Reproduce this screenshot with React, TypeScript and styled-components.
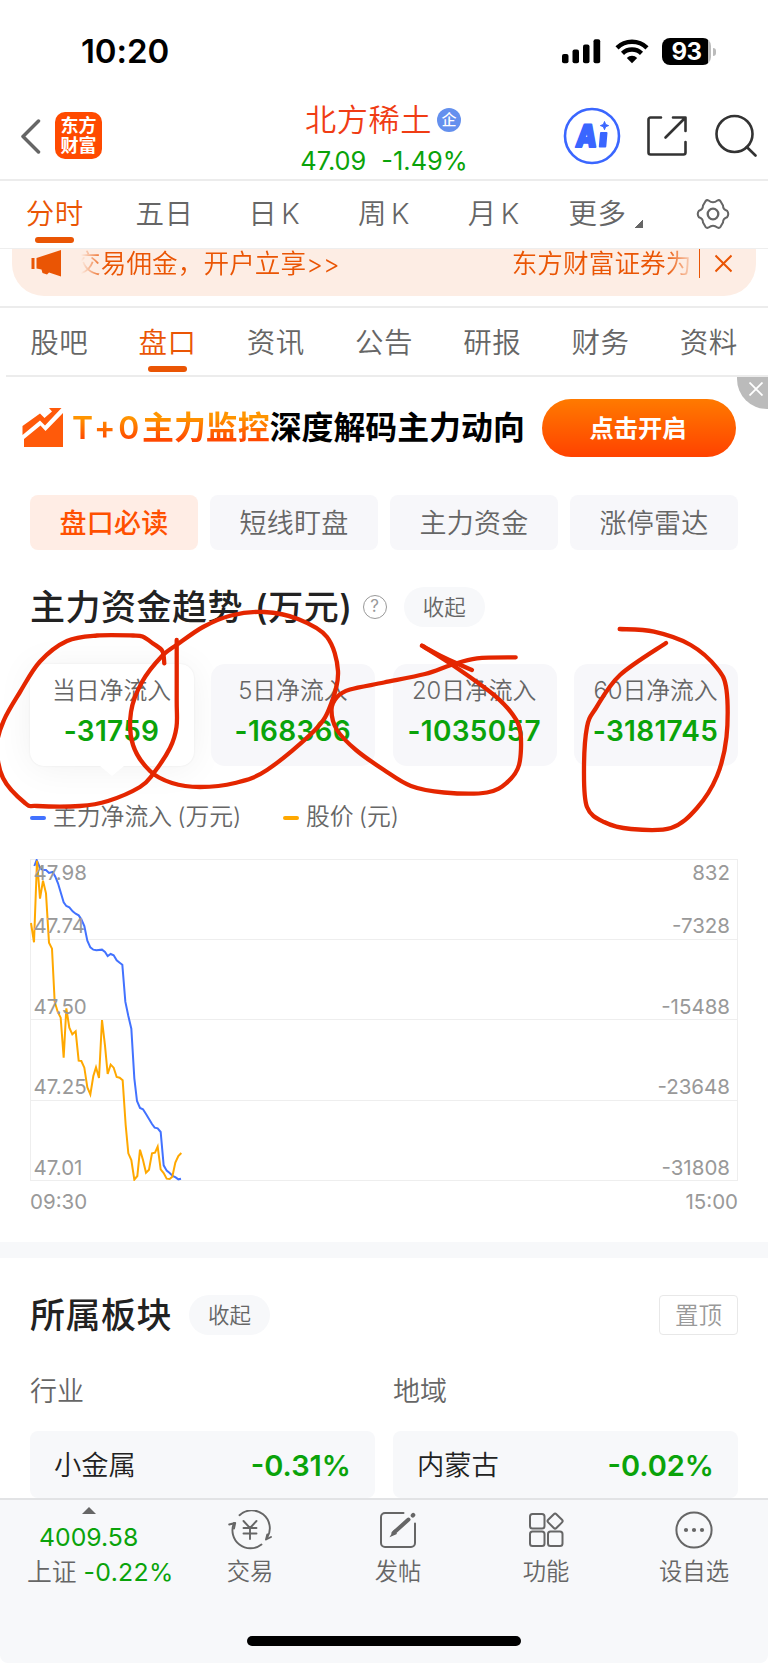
import React from 'react';
import styled, { createGlobalStyle, css } from 'styled-components';

const ORANGE = '#ea5504';
const GREEN = '#0aa30a';
const GREY = '#666';

const GlobalStyle = createGlobalStyle`
  * { box-sizing: border-box; }
  body {
    margin: 0;
    background: #fff;
    font-family: Inter, "Noto Sans CJK SC", sans-serif;
    color: #222;
    -webkit-font-smoothing: antialiased;
  }
`;

const Screen = styled.div`
  position: relative;
  width: 768px;
  height: 1663px;
  overflow: hidden;
  display: flex;
  flex-direction: column;
  background: #fff;
  white-space: nowrap;
`;

const StatusBar = styled.div`
  height: 90px;
  flex: none;
  display: flex;
  justify-content: space-between;
  padding: 35px 57px 0 81px;
`;

const Clock = styled.div`
  font-size: 33px;
  font-weight: 600;
  line-height: 33px;
  letter-spacing: -0.1px;
  color: #000;
`;

const StatusIcons = styled.div`
  display: flex;
  align-items: center;
  height: 32px;
  gap: 13.4px;
`;

const Battery = styled.div`
  position: relative;
  width: 49px;
  height: 27px;
  border-radius: 8px;
  background: linear-gradient(90deg, #000 94%, #bbb 94%);
  color: #fff;
  font-size: 24px;
  font-weight: 700;
  line-height: 28px;
  text-align: center;
  letter-spacing: -0.5px;
  &::after {
    content: '';
    position: absolute;
    right: -5px;
    top: 10px;
    width: 3px;
    height: 8px;
    border-radius: 0 3px 3px 0;
    background: #bbb;
  }
`;

const NavBar = styled.header`
  height: 91px;
  flex: none;
  display: grid;
  grid-template-columns: 260px 1fr 260px;
  border-bottom: 2px solid #ececec;
`;

const NavLeft = styled.div`
  display: flex;
  align-items: center;
  padding: 2px 0 0 20px;
  gap: 13px;
`;

const Logo = styled.div`
  width: 47px;
  height: 47px;
  border-radius: 10px;
  background: #ff4a00;
  color: #fff;
  font-size: 18px;
  font-weight: 700;
  line-height: 19.5px;
  padding-top: 4px;
  text-align: center;
`;

const NavTitle = styled.div`
  display: flex;
  flex-direction: column;
  align-items: center;
`;

const StockName = styled.div`
  display: flex;
  align-items: center;
  gap: 5px;
  height: 34px;
  margin: 13px 2px 0 0;
  font-size: 31.2px;
  letter-spacing: 0.6px;
  font-weight: 350;
  line-height: 34px;
  color: #f03c14;
`;

const Badge = styled.span`
  width: 24px;
  height: 24px;
  margin-bottom: 1px;
  border-radius: 50%;
  background: #6490ee;
  color: #fff;
  font-size: 15px;
  font-weight: 500;
  line-height: 23px;
  letter-spacing: 0;
  text-align: center;
`;

const StockQuote = styled.div`
  display: flex;
  gap: 15px;
  margin-top: 8px;
  font-size: 25.4px;
  letter-spacing: 0;
  line-height: 32px;
  color: ${GREEN};
`;

const NavActions = styled.div`
  display: flex;
  align-items: center;
  justify-content: flex-end;
  padding: 2px 11px 0 0;
  gap: 25px;
`;

const Tabs = styled.nav<{ $inset?: number; $top: number }>`
  height: 67px;
  flex: none;
  display: flex;
  padding: ${p => p.$top}px ${p => p.$inset ?? 0}px 0;
`;

const Tab = styled.div<{ $active?: boolean }>`
  flex: 1;
  display: flex;
  flex-direction: column;
  align-items: center;
  font-size: 28.5px;
  letter-spacing: 0.5px;
  font-weight: 350;
  line-height: 40px;
  color: ${p => (p.$active ? ORANGE : GREY)};
  &::after {
    content: '';
    width: 39px;
    height: 6px;
    margin-top: 3px;
    border-radius: 3px;
    background: ${p => (p.$active ? ORANGE : 'transparent')};
  }
`;

const TabLabel = styled.span`
  display: flex;
  align-items: center;
  gap: 4px;
  height: 40px;
`;

const Corner = styled.i`
  width: 8px;
  height: 8px;
  margin: 21px -5px 0 5px;
  background: linear-gradient(135deg, transparent 50%, ${GREY} 50%);
`;

const Notice = styled.div`
  height: 60px;
  flex: none;
  border-top: 1px solid #eee;
  border-bottom: 2px solid #ececec;
  padding: 0 12px;
`;

const NoticePill = styled.div`
  height: 47px;
  border-radius: 0 0 32px 32px / 0 0 32px 32px;
  background: #fdede4;
  display: flex;
  align-items: flex-start;
  padding: 0 24px 0 19px;
  color: ${ORANGE};
  font-size: 25.6px;
  letter-spacing: 0.1px;
  font-weight: 350;
  line-height: 29px;
`;

const Ticker = styled.div`
  flex: 1;
  display: flex;
  justify-content: space-between;
  margin-left: 19px;
  overflow: hidden;
  mask-image: linear-gradient(90deg, transparent, #000 24px, #000 calc(100% - 30px), transparent);
`;

const TickerHead = styled.span`
  margin-left: -6px;
`;

const TickerTail = styled.span`
  margin-right: 4px;
`;

const NoticeDivider = styled.i`
  width: 1.5px;
  height: 29px;
  margin: 0 15px 0 3px;
  background: ${ORANGE};
`;

const Banner = styled.section`
  position: relative;
  height: 120px;
  flex: none;
  margin-left: 6px;
  border-top: 2px solid #ececec;
  display: flex;
  align-items: flex-start;
  padding: 22px 32px 0 16px;
`;

const BannerText = styled.div`
  margin-left: 8px;
  height: 56px;
  font-size: 31.9px;
  font-weight: 700;
  line-height: 57px;
  color: #000;
  flex: 1;
`;

const Highlight = styled.span`
  background: linear-gradient(180deg, #ff9500 25%, #ff4800 80%);
  -webkit-background-clip: text;
  background-clip: text;
  color: transparent;
`;

const Term = styled.span`
  font-weight: 600;
  letter-spacing: 2.8px;
`;

const BannerButton = styled.button`
  width: 194px;
  height: 58px;
  border: 0;
  border-radius: 29px;
  background: linear-gradient(180deg, #ff7a00, #ff4200);
  color: #fff;
  font: inherit;
  font-size: 24.3px;
  font-weight: 700;
  line-height: 55px;
  padding: 0 2px 0 0;
`;

const BannerClose = styled.div`
  position: absolute;
  right: 0;
  top: 0;
  width: 31px;
  height: 32px;
  background: #bbb;
  border-radius: 0 0 0 30px;
  display: flex;
  align-items: center;
  justify-content: center;
  padding: 0 0 9px 7px;
`;

const Chips = styled.div`
  display: grid;
  grid-template-columns: repeat(4, 1fr);
  gap: 12px;
  height: 55px;
  flex: none;
  padding: 0 30px;
`;

const Chip = styled.div<{ $active?: boolean }>`
  height: 54.5px;
  border-radius: 8px;
  text-align: center;
  font-size: 27px;
  letter-spacing: 0.3px;
  line-height: 58px;
  background: #f7f7fa;
  color: ${GREY};
  font-weight: 350;
  ${p =>
    p.$active &&
    css`
      background: #ffede5;
      color: #ff5000;
      font-weight: 500;
    `}
`;

const Heading = styled.div<{ $top: number }>`
  display: flex;
  align-items: center;
  height: 40px;
  flex: none;
  margin-top: ${p => p.$top}px;
  padding: 0 30px;
`;

const Title = styled.h2`
  margin: 0;
  font-size: 35px;
  letter-spacing: 0.5px;
  word-spacing: 2px;
  font-weight: 500;
  line-height: 42px;
  color: #222;
`;

const Fold = styled.div<{ $gap: number }>`
  width: 81px;
  height: 40px;
  margin-left: ${p => p.$gap}px;
  border-radius: 20px;
  background: #f7f8fa;
  text-align: center;
  font-size: 21.5px;
  font-weight: 350;
  line-height: 40px;
  color: ${GREY};
`;

const Help = styled.div`
  width: 24px;
  height: 24px;
  margin-left: 10px;
  border: 1.6px solid #999;
  border-radius: 50%;
  text-align: center;
  font-size: 17px;
  line-height: 21px;
  color: #999;
`;

const FlowCards = styled.div`
  display: grid;
  grid-template-columns: repeat(4, 164px);
  justify-content: space-between;
  height: 102px;
  flex: none;
  margin-top: 37px;
  padding: 0 30px;
`;

const FlowCard = styled.div<{ $active?: boolean }>`
  position: relative;
  border-radius: 14px;
  background: ${p => (p.$active ? '#fff' : '#f7f7fa')};
  text-align: center;
  padding: 10px 1px 0 0;
  ${p =>
    p.$active &&
    css`
      box-shadow: 0 2px 36px rgba(0, 0, 0, 0.06), 0 0 2px rgba(0, 0, 0, 0.08);
      &::after {
        content: '';
        position: absolute;
        left: 70px;
        bottom: -10px;
        border: 12px solid transparent;
        border-width: 10px 12px 0;
        border-top-color: #fff;
      }
    `}
`;

const FlowLabel = styled.div`
  font-size: 23.8px;
  font-weight: 350;
  line-height: 34px;
  color: ${GREY};
`;

const FlowValue = styled.div`
  margin-top: 7px;
  font-size: 28px;
  letter-spacing: 0.3px;
  font-weight: 600;
  line-height: 32px;
  color: ${GREEN};
`;

const Legend = styled.div`
  display: flex;
  align-items: center;
  height: 36px;
  flex: none;
  margin-top: 33px;
  padding: 0 30px;
  font-size: 23.8px;
  font-weight: 350;
  line-height: 38px;
  color: ${GREY};
`;

const LegendMark = styled.i<{ $color: string }>`
  width: 16px;
  height: 4px;
  margin: 1px 7px 0 0;
  border-radius: 2px;
  background: ${p => p.$color};
`;

const LegendText = styled.span`
  min-width: 230px;
  word-spacing: -1.5px;
`;

const ChartBox = styled.div`
  height: 322px;
  flex: none;
  margin: 24px 30px 0;
  svg { display: block; }
  text {
    font-size: 20.5px;
    letter-spacing: 0;
    fill: #999;
  }
`;

const TimeAxis = styled.div`
  display: flex;
  justify-content: space-between;
  height: 61px;
  flex: none;
  padding: 8px 30px 0;
  font-size: 20.5px;
  line-height: 26px;
  color: #999;
`;

const Divider = styled.div`
  height: 16px;
  flex: none;
  background: #f7f8fa;
`;

const PinButton = styled.button`
  width: 79px;
  height: 40px;
  margin-left: auto;
  padding: 0;
  border: 1.5px solid #e8e8e8;
  border-radius: 4px;
  background: #fff;
  color: #999;
  font: inherit;
  font-size: 23.5px;
  font-weight: 350;
  line-height: 37px;
`;

const Sectors = styled.div`
  display: grid;
  grid-template-columns: 1fr 1fr;
  gap: 0 18px;
  flex: none;
  height: 163px;
  overflow: hidden;
  padding: 37px 30px 0;
`;

const SectorKind = styled.div`
  height: 59px;
  font-size: 27px;
  font-weight: 350;
  line-height: 39px;
  color: ${GREY};
`;

const Sector = styled.div`
  display: flex;
  justify-content: space-between;
  height: 67px;
  border-radius: 8px;
  background: #f7f8fa;
  padding: 0 24px;
  font-size: 27.3px;
  font-weight: 350;
  line-height: 70px;
  color: #222;
`;

const Change = styled.span`
  color: ${GREEN};
  font-size: 29px;
  font-weight: 600;
  line-height: 69px;
`;

const BottomBar = styled.footer`
  position: relative;
  flex: 1;
  display: grid;
  grid-template-columns: 176px repeat(4, 148px);
  border-top: 2px solid #e2e3e5;
  border-radius: 0 0 8px 8px;
  background: #f7f8fa;
`;

const IndexCell = styled.div`
  padding-left: 27px;
  font-size: 24.8px;
  font-weight: 350;
  color: ${GREY};
`;

const IndexArrow = styled.i`
  display: block;
  width: 0;
  margin: 7px 0 0 55px;
  border: 7px solid transparent;
  border-width: 0 7px 7px;
  border-bottom-color: ${GREY};
`;

const IndexValue = styled.div`
  margin: 7px 0 0 12px;
  line-height: 32px;
  font-weight: 400;
  color: ${GREEN};
`;

const IndexChange = styled.div`
  display: flex;
  gap: 7px;
  margin-top: 3px;
  line-height: 32px;
  b { font-weight: 400; letter-spacing: 0.3px; color: ${GREEN}; }
`;

const Action = styled.div`
  display: flex;
  flex-direction: column;
  align-items: center;
  padding-top: 10px;
  font-size: 23.3px;
  font-weight: 350;
  line-height: 32px;
  color: ${GREY};
  svg { margin-bottom: 6px; }
`;

const HomeIndicator = styled.div`
  position: absolute;
  left: 247px;
  bottom: 17px;
  width: 274px;
  height: 10px;
  border-radius: 5px;
  background: #000;
`;

const Markup = styled.svg`
  position: absolute;
  left: 0;
  top: 600px;
  pointer-events: none;
`;

type Pt = [number, number];

/** Catmull-Rom spline through a list of points, as an SVG path. */
const smooth = (pts: Pt[]) => {
  let d = `M${pts[0].join(' ')}`;
  for (let i = 0; i < pts.length - 1; i++) {
    const a = pts[i - 1] ?? pts[i];
    const b = pts[i];
    const c = pts[i + 1];
    const e = pts[i + 2] ?? c;
    d += `C${b[0] + (c[0] - a[0]) / 6} ${b[1] + (c[1] - a[1]) / 6} ${c[0] - (e[0] - b[0]) / 6} ${c[1] - (e[1] - b[1]) / 6} ${c[0]} ${c[1]}`;
  }
  return d;
};

const penStrokes: Pt[][] = [
  [[164.3, 663.3], [162.3, 651], [153, 643.5], [143, 636.8], [133, 635.5], [97, 635.5], [67, 641], [40, 661.5], [20, 692], [4, 720], [-3, 745], [3, 778], [25, 803], [37, 806], [80, 806], [108, 801], [140, 787], [153, 774], [170, 748], [176.5, 727], [176.7, 700], [176.7, 640]],
  [[178, 644], [203, 627], [231, 615.5], [264, 612], [298, 619], [327, 637], [338, 671], [331, 704], [315, 730], [267, 770], [235, 783], [200, 787], [172, 783], [150, 771], [133, 745], [131, 712], [142, 682], [162, 656], [178, 644]],
  [[515.7, 657.3], [477, 658.3], [451, 665], [425, 674], [384, 682.5], [350, 689.5], [337, 697], [331.5, 710], [337, 730], [356, 750], [384, 770], [411, 786], [444, 792.5], [487, 792.5], [507, 782.5], [519, 765], [520.5, 733], [513, 715], [494, 695], [454, 666], [422, 645.7]],
  [[422, 645.7], [445, 658], [472, 670]],
  [[619.7, 629], [654, 631.7], [690.7, 645], [717, 668], [726.5, 690], [726.5, 737], [717, 776], [697, 808], [671, 828], [631, 829], [604, 822], [587, 807], [584, 770], [587, 727], [596, 708], [620, 675], [666, 643]],
];

const chipNames = ['盘口必读', '短线盯盘', '主力资金', '涨停雷达'];
const flows = [
  ['当日净流入', '-31759'],
  ['5日净流入', '-168366'],
  ['20日净流入', '-1035057'],
  ['60日净流入', '-3181745'],
];
const priceTicks: [string, string, number][] = [
  ['47.98', '832', 21],
  ['47.74', '-7328', 74],
  ['47.50', '-15488', 154.5],
  ['47.25', '-23648', 235],
  ['47.01', '-31808', 316],
];

const inflowLine =
  '103,78 110,60 120,84 129,90 138,90 147,99 158,96 166,110 174,130 191,187 199,198 208,202 218,214 227,221 236,226 244,238 253,258 262,302 271,322 280,329 289,331 306,329 315,336 323,348 332,342 341,346 350,361 359,368 367,374 376,485 385,528 394,566 403,715 411,783 420,804 429,808 438,822 447,837 456,852 464,863 473,865 482,876 491,976 500,992 509,999 518,1008 527,1012 535,1018 543,1016';
const priceLine =
  '93,249 102,307 111,62 120,176 129,122 138,160 147,308 156,326 164,485 173,515 182,533 191,653 199,505 208,563 217,583 227,574 236,662 244,663 253,683 262,742 271,763 280,708 288,682 297,714 306,540 315,617 323,702 332,674 341,683 350,711 359,713 368,721 377,855 385,940 394,960 403,1019 412,1008 420,929 429,960 438,998 447,989 456,940 465,938 473,920 482,988 491,999 500,1016 509,1017 517,1010 526,968 535,948 544,939';

const TradeIcon = () => (
  <svg width="44" height="40" viewBox="0 0 44 40" fill="none" stroke={GREY} strokeWidth="1.9" strokeLinejoin="round" strokeLinecap="round">
    <path d="M11.500 5.200A18 18 0 0 1 39.300 27.500M33.500 34.500A18 18 0 0 1 6 13" />
    <path d="M1.200 14.500l6-1.500-1.200 5.500M38 29.500l5-2.500M38 29.500l1.300-5" />
    <path d="M15.500 11l6.500 7 6.500-7M22 18v11M15.500 18h13M15.500 23.500h13" />
  </svg>
);

const PostIcon = () => (
  <svg width="36" height="40" viewBox="0 0 36 40" fill="none" stroke={GREY} strokeWidth="2" strokeLinecap="round">
    <path d="M23.500 3H5a4 4 0 0 0-4 4v26a4 4 0 0 0 4 4h26a4 4 0 0 0 4-4V13.500" />
    <path d="M28.500 9.500L13.500 23" strokeWidth="4" />
    <path d="M14.500 20.500L11.500 25.500l4.500-2" strokeWidth="1.600" fill={GREY} />
    <path d="M32.800 5.500l.4-.4" strokeWidth="4.200" />
  </svg>
);

const GridIcon = () => (
  <svg width="36" height="40" viewBox="0 0 36 40" fill="none" stroke={GREY} strokeWidth="2">
    <rect x="2" y="4" width="14.500" height="14.500" rx="2.500" />
    <rect x="2" y="21.500" width="14.500" height="14.500" rx="2.500" />
    <rect x="20" y="21.500" width="14.500" height="14.500" rx="2.500" />
    <rect x="21.300" y="5.300" width="11.600" height="11.600" rx="1.800" transform="rotate(45 27.100 11.100)" />
  </svg>
);

const MoreIcon = () => (
  <svg width="40" height="40" viewBox="0 0 40 40" fill="none" stroke={GREY} strokeWidth="2">
    <circle cx="20" cy="20" r="17.600" />
    <g fill={GREY} stroke="none">
      <circle cx="12" cy="20" r="2.100" />
      <circle cx="20" cy="20" r="2.100" />
      <circle cx="28" cy="20" r="2.100" />
    </g>
  </svg>
);

const GearIcon = () => (
  <svg width="34" height="32" viewBox="0 0 34 32" fill="none" stroke={GREY} strokeWidth="2" strokeLinejoin="round">
    <path d="M9.500 3.200Q10.800 1.500 12.600 2.500Q17 6 21.400 2.500Q23.200 1.500 24.500 3.200L27 7.500Q27 11.500 31 12.700Q33.500 16 31 19.300Q27 20.500 27 24.500L24.500 28.800Q23.200 30.500 21.400 29.500Q17 26 12.600 29.500Q10.800 30.500 9.500 28.800L7 24.500Q7 20.500 3 19.300Q.500 16 3 12.700Q7 11.500 7 7.500Z" />
    <circle cx="17" cy="16" r="5.300" strokeWidth="2.300" />
  </svg>
);

export default function App() {
  return (
    <Screen>
      <GlobalStyle />
      <StatusBar>
        <Clock>10:20</Clock>
        <StatusIcons>
          <svg width="39" height="25" viewBox="0 0 39 25">
            <rect x="0" y="15" width="6.500" height="9.300" rx="2" />
            <rect x="10.500" y="10.500" width="6.500" height="13.800" rx="2" />
            <rect x="21" y="5.500" width="6.500" height="18.800" rx="2" />
            <rect x="31.500" y="0.300" width="6.700" height="24" rx="2" />
          </svg>
          <svg width="34" height="25" viewBox="0 0 34 25" fill="none" stroke="#000" strokeWidth="4.400">
            <path d="M2 8.800A21.500 21.500 0 0 1 32 8.800" />
            <path d="M7.500 14.300A13.700 13.700 0 0 1 26.500 14.300" />
            <path d="M17 24.300L11.800 19a7.400 7.400 0 0 1 10.400 0Z" fill="#000" stroke="none" />
          </svg>
          <Battery>93</Battery>
        </StatusIcons>
      </StatusBar>

      <NavBar>
        <NavLeft>
          <svg width="22" height="36" viewBox="0 0 22 36" fill="none" stroke={GREY} strokeWidth="3.500" strokeLinecap="round" strokeLinejoin="round">
            <path d="M18.500 3L3 18.500L18.500 34" />
          </svg>
          <Logo>东方<br />财富</Logo>
        </NavLeft>
        <NavTitle>
          <StockName>北方稀土<Badge>企</Badge></StockName>
          <StockQuote><span>47.09</span><span>-1.49%</span></StockQuote>
        </NavTitle>
        <NavActions>
          <svg width="58" height="58" viewBox="0 0 58 58">
            <circle cx="29" cy="29" r="27" fill="none" stroke="#3a66ff" strokeWidth="2.600" />
            <g fill="#3a66ff" stroke="#3a66ff" strokeWidth="2" strokeLinejoin="round" fontWeight="900" fontSize="31">
              <text transform="translate(12 39.500) skewX(-6)" textLength="21" lengthAdjust="spacingAndGlyphs">A</text>
              <path d="M38 26h5.500l-1.200 13.500h-5.500z" />
              <path strokeWidth="1" d="M41.500 14.500l1.100 3 3 1.100-3 1.100-1.100 3-1.100-3-3-1.100 3-1.100z" />
            </g>
          </svg>
          <svg width="42" height="42" viewBox="0 0 42 42" fill="none" stroke="#333" strokeWidth="2.600" strokeLinejoin="round" strokeLinecap="round">
            <path d="M15 2.500H4.500a2 2 0 0 0-2 2v33a2 2 0 0 0 2 2h33a2 2 0 0 0 2-2V27" />
            <path d="M27 2.500H39.500V16M39 3L19.500 22.500" />
          </svg>
          <svg width="44" height="44" viewBox="0 0 44 44" fill="none" stroke="#333" strokeWidth="2.600" strokeLinecap="round">
            <circle cx="21.500" cy="20" r="18" />
            <path d="M33.800 33L42.500 41.500" />
          </svg>
        </NavActions>
      </NavBar>

      <Tabs $top={12.5}>
        <Tab $active><TabLabel>分时</TabLabel></Tab>
        <Tab><TabLabel>五日</TabLabel></Tab>
        <Tab><TabLabel>日<span>K</span></TabLabel></Tab>
        <Tab><TabLabel>周<span>K</span></TabLabel></Tab>
        <Tab><TabLabel>月<span>K</span></TabLabel></Tab>
        <Tab><TabLabel>更多<Corner /></TabLabel></Tab>
        <Tab><TabLabel><GearIcon /></TabLabel></Tab>
      </Tabs>

      <Notice>
        <NoticePill>
          <svg width="31" height="29" viewBox="0 0 31 29" fill={ORANGE}>
            <path d="M0.500 9h3v11h-3zM5.500 9L30 1v26.500L18 23.500l-2 2-4.500-1.500-1-3.500-5-1z" />
          </svg>
          <Ticker>
            <TickerHead>交易佣金，开户立享&gt;&gt;</TickerHead>
            <TickerTail>东方财富证券为</TickerTail>
          </Ticker>
          <NoticeDivider />
          <svg width="17" height="29" viewBox="0 0 17 29" stroke={ORANGE} strokeWidth="2">
            <path d="M0.500 6.500L16.500 22.500M16.500 6.500L0.500 22.500" />
          </svg>
        </NoticePill>
      </Notice>

      <Tabs $inset={5} $top={15}>
        {['股吧', '盘口', '资讯', '公告', '研报', '财务', '资料'].map(t => (
          <Tab key={t} $active={t === '盘口'}><TabLabel>{t}</TabLabel></Tab>
        ))}
      </Tabs>

      <Banner>
        <svg width="42" height="56" viewBox="0 0 42 56" fill="#ff5a0a">
          <path d="M0.500 27L18 14.500l4.500 4.500 7.500-6.500-3-3.500h12.500L23 26.500l-5-5L0.500 36z" />
          <path d="M2 40L18.500 26.500l5 5.500L41 14v34H2z" />
        </svg>
        <BannerText><Highlight><Term>T+0</Term>主力监控</Highlight>深度解码主力动向</BannerText>
        <BannerButton>点击开启</BannerButton>
        <BannerClose>
          <svg width="14" height="14" viewBox="0 0 14 14" stroke="#fff" strokeWidth="1.800">
            <path d="M.5.500l13 13M13.500.500l-13 13" />
          </svg>
        </BannerClose>
      </Banner>

      <Chips>
        {chipNames.map((c, i) => <Chip key={c} $active={i === 0}>{c}</Chip>)}
      </Chips>

      <Heading $top={37}>
        <Title>主力资金趋势 (万元)</Title>
        <Help>?</Help>
        <Fold $gap={17}>收起</Fold>
      </Heading>

      <FlowCards>
        {flows.map(([label, value], i) => (
          <FlowCard key={label} $active={i === 0}>
            <FlowLabel>{label}</FlowLabel>
            <FlowValue>{value}</FlowValue>
          </FlowCard>
        ))}
      </FlowCards>

      <Legend>
        <LegendMark $color="#4272ff" />
        <LegendText>主力净流入 (万元)</LegendText>
        <LegendMark $color="#ffa800" />
        <LegendText>股价 (元)</LegendText>
      </Legend>

      <ChartBox>
        <svg width="708" height="322" viewBox="0 0 708 322" fill="none">
          <path d="M0 .5H708M0 80.500H708M0 160.500H708M0 241.500H708M0 321.500H708M.5 0V322M707.500 0V322" stroke="#eee" />
          <g transform="translate(-30 -19) scale(.33333)" strokeWidth="6" strokeLinejoin="miter">
            <polyline points={inflowLine} stroke="#4272ff" />
            <polyline points={priceLine} stroke="#ffa800" />
          </g>
          {priceTicks.map(([price, flow, y]) => (
            <React.Fragment key={price}>
              <text x="3.500" y={y}>{price}</text>
              <text x="700" y={y} textAnchor="end">{flow}</text>
            </React.Fragment>
          ))}
        </svg>
      </ChartBox>
      <TimeAxis><span>09:30</span><span>15:00</span></TimeAxis>

      <Divider />

      <Heading $top={37}>
        <Title>所属板块</Title>
        <Fold $gap={17}>收起</Fold>
        <PinButton>置顶</PinButton>
      </Heading>
      <Sectors>
        <SectorKind>行业</SectorKind>
        <SectorKind>地域</SectorKind>
        <Sector>小金属<Change>-0.31%</Change></Sector>
        <Sector>内蒙古<Change>-0.02%</Change></Sector>
      </Sectors>

      <BottomBar>
        <IndexCell>
          <IndexArrow />
          <IndexValue>4009.58</IndexValue>
          <IndexChange>上证<b>-0.22%</b></IndexChange>
        </IndexCell>
        <Action><TradeIcon />交易</Action>
        <Action><PostIcon />发帖</Action>
        <Action><GridIcon />功能</Action>
        <Action><MoreIcon />设自选</Action>
        <HomeIndicator />
      </BottomBar>

      <Markup width="768" height="240" viewBox="0 600 768 240" fill="none" stroke="#e42600" strokeWidth="4.300" strokeLinecap="round" strokeLinejoin="round">
        {penStrokes.map((s, i) => <path key={i} d={smooth(s)} />)}
      </Markup>
    </Screen>
  );
}
